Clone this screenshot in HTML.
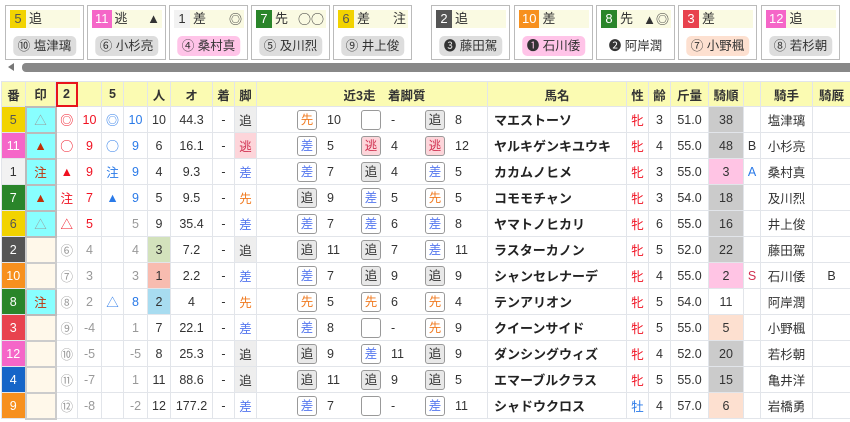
<!DOCTYPE html>
<html><head><meta charset="utf-8"><style>
*{box-sizing:border-box;margin:0;padding:0}
body{width:850px;height:422px;overflow:hidden;background:#fff;font-family:"Liberation Sans","Noto Sans CJK JP",sans-serif;font-size:12.5px;color:#333;position:relative}
.card{position:absolute;top:5px;width:79px;height:55px;border:1px solid #bbb;background:#fff}
.ct{position:absolute;left:4px;top:4px;width:70px;height:18px;background:#fafae2;font-size:13px;line-height:18px}
.ct .n{display:inline-block;height:18px;min-width:16px;padding:0 3px;text-align:center;margin-right:3px}
.ct .m{position:absolute;right:2px;top:0}
.pill{position:absolute;top:30px;left:50%;transform:translateX(-50%);height:20px;line-height:20px;padding:0 5px;border-radius:5px;background:#ddd;white-space:nowrap;font-size:12.5px}
.sb{position:absolute;left:22px;top:63px;width:828px;height:9px;background:#888;border-radius:4px 0 0 4px}
.arr{position:absolute;left:8px;top:63px;width:0;height:0;border-top:4.5px solid transparent;border-bottom:4.5px solid transparent;border-right:6px solid #777}
table{position:absolute;left:1px;top:81px;width:849px;border-collapse:collapse;table-layout:fixed}
td,th{border:1px solid #e2e5ea;height:26px;text-align:center;font-weight:normal;padding:0;white-space:nowrap;overflow:hidden}
th{background:#fbfbb2;height:25px;font-weight:bold;color:#333}
.h2{outline:2px solid #e8141c;outline-offset:-2px}
.w1{background:#f2f2f2;color:#333}.w2{background:#555;color:#fff}.w3{background:#e8424e;color:#fff}.w4{background:#1565c8;color:#fff}.w5{background:#f2d300;color:#555}.w7{background:#2a852a;color:#fff}.w9{background:#f7901e;color:#fff}.w11{background:#f566c8;color:#fff}
.mk{background:#88ffff;border:2px solid #bbb}.mk0{background:#fff8ea;border:2px solid #ccc}
.r{color:#f01020}.bl{color:#2a7ae8}.gy{color:#999}.dr{color:#c03008}
.big{font-family:"Noto Sans CJK JP",sans-serif;font-size:13px}
.ao{color:#5577ee}.or{color:#f07a20}.cr{color:#d03050}
.k{background:#eeeeee}.kp{background:#fdd5da;color:#d03050}
.rn{position:relative;text-align:left}
.rn span{position:absolute;top:3px;height:20px;line-height:20px}
.rn span.b{line-height:18px}
.b{width:20px;height:20px;border:1px solid #999;border-radius:3px;text-align:center;background:#fff}
.b.k{background:#e8e8e8;color:#333}.b.kp{background:#fdd5da}
.nm{text-align:left;padding-left:6px;font-weight:bold;font-size:13px;color:#222}
.gr{background:#cbcbcb}.pk{background:#ffc4e4}.pc{background:#fde0d0}
</style></head><body>
<div class="card" style="left:5px"><div class="ct"><span class="n w5">5</span>追</div><div class="pill">⑩ 塩津璃</div></div>
<div class="card" style="left:87px"><div class="ct"><span class="n w11">11</span>逃<span class="m">▲</span></div><div class="pill">⑥ 小杉亮</div></div>
<div class="card" style="left:169px"><div class="ct"><span class="n w1">1</span>差<span class="m big">◎</span></div><div class="pill" style="background:#ffc4e8">④ 桑村真</div></div>
<div class="card" style="left:251px"><div class="ct"><span class="n w7">7</span>先<span class="m big">○○</span></div><div class="pill">⑤ 及川烈</div></div>
<div class="card" style="left:333px"><div class="ct"><span class="n w5">6</span>差<span class="m">注</span></div><div class="pill">⑨ 井上俊</div></div>
<div class="card" style="left:431px"><div class="ct"><span class="n w2">2</span>追</div><div class="pill">❸ 藤田駕</div></div>
<div class="card" style="left:514px"><div class="ct"><span class="n w9">10</span>差</div><div class="pill" style="background:#ffc4e8">❶ 石川倭</div></div>
<div class="card" style="left:596px"><div class="ct"><span class="n w7">8</span>先<span class="m">▲<span class="big">◎</span></span></div><div class="pill" style="background:none">❷ 阿岸潤</div></div>
<div class="card" style="left:678px"><div class="ct"><span class="n w3">3</span>差</div><div class="pill" style="background:#fde0d0">⑦ 小野楓</div></div>
<div class="card" style="left:761px"><div class="ct"><span class="n w11">12</span>追</div><div class="pill">⑧ 若杉朝</div></div>
<div class="arr"></div><div class="sb"></div>
<table>
<colgroup><col style="width:24px"><col style="width:30px"><col style="width:22px"><col style="width:24px"><col style="width:22px"><col style="width:24px"><col style="width:23px"><col style="width:42px"><col style="width:22px"><col style="width:22px"><col style="width:231px"><col style="width:139px"><col style="width:22px"><col style="width:22px"><col style="width:38px"><col style="width:35px"><col style="width:17px"><col style="width:52px"><col style="width:38px"></colgroup>
<tr><th>番</th><th>印</th><th class="h2">2</th><th></th><th>5</th><th></th><th>人</th><th>オ</th><th>着</th><th>脚</th><th style="padding-left:25px">近3走　着脚質</th><th>馬名</th><th>性</th><th>齢</th><th>斤量</th><th>騎順</th><th></th><th>騎手</th><th>騎厩</th></tr>
<tr><td class="w5">5</td><td class="mk gy">△</td><td class="r big">◎</td><td class="r">10</td><td class="bl big">◎</td><td class="bl">10</td><td>10</td><td>44.3</td><td>-</td><td class="k">追</td><td class="rn"><span class="b or" style="left:40px">先</span><span style="left:70px">10</span><span class="b" style="left:104px"></span><span style="left:134px">-</span><span class="b k" style="left:168px">追</span><span style="left:198px">8</span></td><td class="nm">マエストーソ</td><td class="r">牝</td><td>3</td><td>51.0</td><td class="gr">38</td><td></td><td>塩津璃</td><td></td></tr>
<tr><td class="w11">11</td><td class="mk dr">▲</td><td class="r big">○</td><td class="r">9</td><td class="bl big">○</td><td class="bl">9</td><td>6</td><td>16.1</td><td>-</td><td class="kp">逃</td><td class="rn"><span class="b ao" style="left:40px">差</span><span style="left:70px">5</span><span class="b kp" style="left:104px">逃</span><span style="left:134px">4</span><span class="b kp" style="left:168px">逃</span><span style="left:198px">12</span></td><td class="nm">ヤルキゲンキユウキ</td><td class="r">牝</td><td>4</td><td>55.0</td><td class="gr">48</td><td>B</td><td>小杉亮</td><td></td></tr>
<tr><td class="w1">1</td><td class="mk dr">注</td><td class="r">▲</td><td class="r">9</td><td class="bl">注</td><td class="bl">9</td><td>4</td><td>9.3</td><td>-</td><td class="ao">差</td><td class="rn"><span class="b ao" style="left:40px">差</span><span style="left:70px">7</span><span class="b k" style="left:104px">追</span><span style="left:134px">4</span><span class="b ao" style="left:168px">差</span><span style="left:198px">5</span></td><td class="nm">カカムノヒメ</td><td class="r">牝</td><td>3</td><td>55.0</td><td class="pk">3</td><td class="bl">A</td><td>桑村真</td><td></td></tr>
<tr><td class="w7">7</td><td class="mk dr">▲</td><td class="r">注</td><td class="r">7</td><td class="bl">▲</td><td class="bl">9</td><td>5</td><td>9.5</td><td>-</td><td class="or">先</td><td class="rn"><span class="b k" style="left:40px">追</span><span style="left:70px">9</span><span class="b ao" style="left:104px">差</span><span style="left:134px">5</span><span class="b or" style="left:168px">先</span><span style="left:198px">5</span></td><td class="nm">コモモチャン</td><td class="r">牝</td><td>3</td><td>54.0</td><td class="gr">18</td><td></td><td>及川烈</td><td></td></tr>
<tr><td class="w5">6</td><td class="mk gy">△</td><td class="r">△</td><td class="r">5</td><td></td><td class="gy">5</td><td>9</td><td>35.4</td><td>-</td><td class="ao">差</td><td class="rn"><span class="b ao" style="left:40px">差</span><span style="left:70px">7</span><span class="b ao" style="left:104px">差</span><span style="left:134px">6</span><span class="b ao" style="left:168px">差</span><span style="left:198px">8</span></td><td class="nm">ヤマトノヒカリ</td><td class="r">牝</td><td>6</td><td>55.0</td><td class="gr">16</td><td></td><td>井上俊</td><td></td></tr>
<tr><td class="w2">2</td><td class="mk0"></td><td class="gy">⑥</td><td class="gy">4</td><td></td><td class="gy">4</td><td style="background:#d3e2bc">3</td><td>7.2</td><td>-</td><td class="k">追</td><td class="rn"><span class="b k" style="left:40px">追</span><span style="left:70px">11</span><span class="b k" style="left:104px">追</span><span style="left:134px">7</span><span class="b ao" style="left:168px">差</span><span style="left:198px">11</span></td><td class="nm">ラスターカノン</td><td class="r">牝</td><td>5</td><td>52.0</td><td class="gr">22</td><td></td><td>藤田駕</td><td></td></tr>
<tr><td class="w9">10</td><td class="mk0"></td><td class="gy">⑦</td><td class="gy">3</td><td></td><td class="gy">3</td><td style="background:#f8bcb0">1</td><td>2.2</td><td>-</td><td class="ao">差</td><td class="rn"><span class="b ao" style="left:40px">差</span><span style="left:70px">7</span><span class="b k" style="left:104px">追</span><span style="left:134px">9</span><span class="b k" style="left:168px">追</span><span style="left:198px">9</span></td><td class="nm">シャンセレナーデ</td><td class="r">牝</td><td>4</td><td>55.0</td><td class="pk">2</td><td class="cr">S</td><td>石川倭</td><td>B</td></tr>
<tr><td class="w7">8</td><td class="mk dr">注</td><td class="gy">⑧</td><td class="gy">2</td><td class="bl">△</td><td class="bl">8</td><td style="background:#a8dcf0">2</td><td>4</td><td>-</td><td class="or">先</td><td class="rn"><span class="b or" style="left:40px">先</span><span style="left:70px">5</span><span class="b or" style="left:104px">先</span><span style="left:134px">6</span><span class="b or" style="left:168px">先</span><span style="left:198px">4</span></td><td class="nm">テンアリオン</td><td class="r">牝</td><td>5</td><td>54.0</td><td>11</td><td></td><td>阿岸潤</td><td></td></tr>
<tr><td class="w3">3</td><td class="mk0"></td><td class="gy">⑨</td><td class="gy">-4</td><td></td><td class="gy">1</td><td>7</td><td>22.1</td><td>-</td><td class="ao">差</td><td class="rn"><span class="b ao" style="left:40px">差</span><span style="left:70px">8</span><span class="b" style="left:104px"></span><span style="left:134px">-</span><span class="b or" style="left:168px">先</span><span style="left:198px">9</span></td><td class="nm">クイーンサイド</td><td class="r">牝</td><td>5</td><td>55.0</td><td class="pc">5</td><td></td><td>小野楓</td><td></td></tr>
<tr><td class="w11">12</td><td class="mk0"></td><td class="gy">⑩</td><td class="gy">-5</td><td></td><td class="gy">-5</td><td>8</td><td>25.3</td><td>-</td><td class="k">追</td><td class="rn"><span class="b k" style="left:40px">追</span><span style="left:70px">9</span><span class="b ao" style="left:104px">差</span><span style="left:134px">11</span><span class="b k" style="left:168px">追</span><span style="left:198px">9</span></td><td class="nm">ダンシングウィズ</td><td class="r">牝</td><td>4</td><td>52.0</td><td class="gr">20</td><td></td><td>若杉朝</td><td></td></tr>
<tr><td class="w4">4</td><td class="mk0"></td><td class="gy">⑪</td><td class="gy">-7</td><td></td><td class="gy">1</td><td>11</td><td>88.6</td><td>-</td><td class="k">追</td><td class="rn"><span class="b k" style="left:40px">追</span><span style="left:70px">11</span><span class="b k" style="left:104px">追</span><span style="left:134px">9</span><span class="b k" style="left:168px">追</span><span style="left:198px">5</span></td><td class="nm">エマーブルクラス</td><td class="r">牝</td><td>5</td><td>55.0</td><td class="gr">15</td><td></td><td>亀井洋</td><td></td></tr>
<tr><td class="w9">9</td><td class="mk0"></td><td class="gy">⑫</td><td class="gy">-8</td><td></td><td class="gy">-2</td><td>12</td><td>177.2</td><td>-</td><td class="ao">差</td><td class="rn"><span class="b ao" style="left:40px">差</span><span style="left:70px">7</span><span class="b" style="left:104px"></span><span style="left:134px">-</span><span class="b ao" style="left:168px">差</span><span style="left:198px">11</span></td><td class="nm">シャドウクロス</td><td class="bl">牡</td><td>4</td><td>57.0</td><td class="pc">6</td><td></td><td>岩橋勇</td><td></td></tr>
</table>
</body></html>
